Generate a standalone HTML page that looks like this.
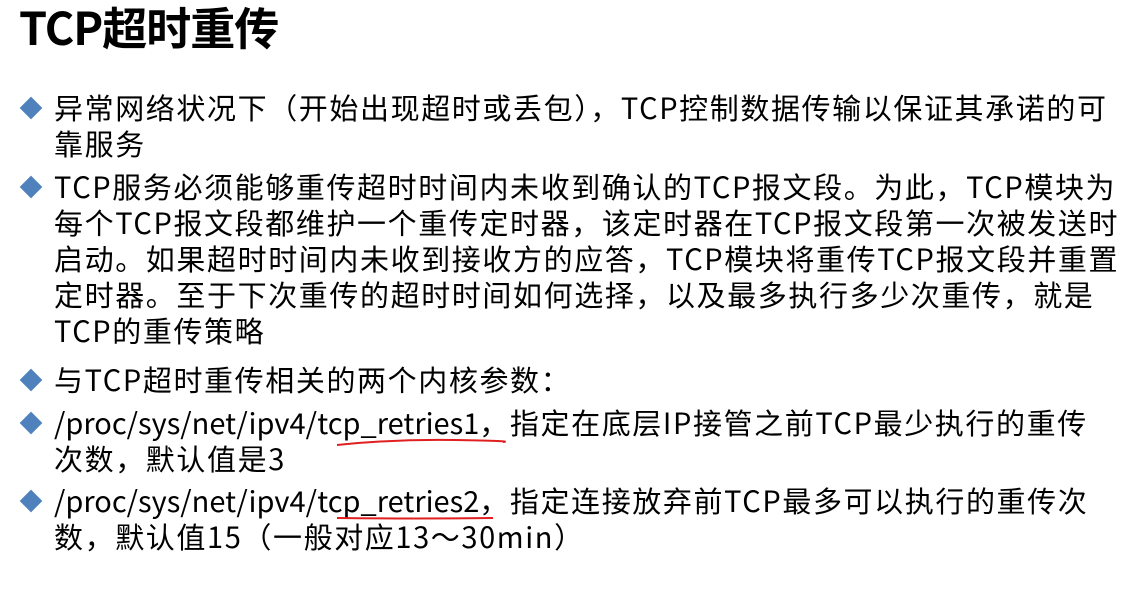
<!DOCTYPE html>
<html><head><meta charset="utf-8"><style>
body{margin:0;width:1148px;height:606px;background:#fff;overflow:hidden;font-family:"Noto Sans CJK SC","Liberation Sans",sans-serif;color:#000}
h1{position:absolute;left:19px;top:-6px;margin:0;font-size:45px;font-weight:bold;line-height:64px;letter-spacing:-1px}
.b{position:absolute;left:54px;font-size:29px;line-height:36px;white-space:nowrap;letter-spacing:1.6px}
.l0{letter-spacing:0}
.d{position:absolute;left:-31px;top:11px;width:16px;height:16px;background:#4f81bd;transform:rotate(45deg)}
svg.l{position:absolute}
</style></head><body>
<h1>TCP超时重传</h1>
<div class="b" style="top:89px"><span class="d"></span>异常网络状况下（开始出现超时或丢包），TCP控制数据传输以保证其承诺的可<br>靠服务</div>
<div class="b" style="top:168px"><span class="d"></span>TCP服务必须能够重传超时时间内未收到确认的TCP报文段。为此，TCP模块为<br>每个TCP报文段都维护一个重传定时器，该定时器在TCP报文段第一次被发送时<br>启动。如果超时时间内未收到接收方的应答，TCP模块将重传TCP报文段并重置<br>定时器。至于下次重传的超时时间如何选择，以及最多执行多少次重传，就是<br>TCP的重传策略</div>
<div class="b" style="top:361px"><span class="d"></span>与TCP超时重传相关的两个内核参数：</div>
<div class="b" style="top:404px"><span class="d"></span><span class="l0">/proc/sys/net/ipv4/tcp_retries1</span>，指定在底层IP接管之前TCP最少执行的重传<br>次数，默认值是3</div>
<div class="b" style="top:482px"><span class="d"></span><span class="l0">/proc/sys/net/ipv4/tcp_retries2</span>，指定连接放弃前TCP最多可以执行的重传次<br>数，默认值15（一般对应13～30min）</div>
<svg class="l" style="left:335px;top:436px" width="172" height="14"><path d="M2 9 Q60 3 120 4 T168 6" stroke="#e02020" stroke-width="2" fill="none"/></svg>
<svg class="l" style="left:335px;top:513px" width="162" height="12"><path d="M2 5 Q80 6 158 5" stroke="#e02020" stroke-width="2" fill="none"/></svg>
</body></html>
